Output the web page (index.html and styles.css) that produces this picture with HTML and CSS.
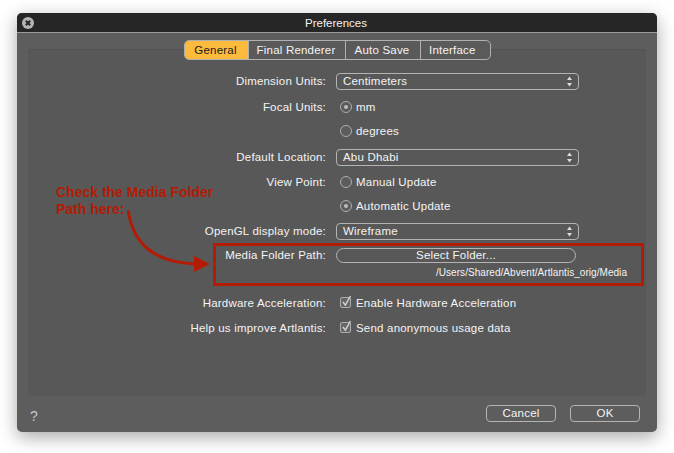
FILE: index.html
```html
<!DOCTYPE html>
<html lang="en">
<head>
    <meta charset="UTF-8">
    <meta name="viewport" content="width=device-width, initial-scale=1.0">
    <title>Preferences</title>
    <link rel="stylesheet" href="styles.css">
</head>
<body>
    <div class="window">
        <div class="titlebar">
            <svg class="close-icon" width="12" height="12" viewBox="0 0 12 12">
                <circle cx="6" cy="6" r="6" fill="#b4b4b4"/>
                <path d="M3.8 3.8L8.2 8.2M8.2 3.8L3.8 8.2" stroke="#262626" stroke-width="2"/>
            </svg>
            <span class="title">Preferences</span>
        </div>

        <div class="content">
            <div class="tabs">
                <div class="tab active tab-general">General</div>
                <div class="tab tab-renderer">Final Renderer</div>
                <div class="tab tab-save">Auto Save</div>
                <div class="tab tab-interface">Interface</div>
            </div>

            <div class="panel">
                <div class="form">
                    <div class="row row-select">
                        <div class="label">Dimension Units:</div>
                        <div class="select">Centimeters
                            <svg class="arrows" width="5" height="11" viewBox="0 0 5 11"><path d="M2.5 0.5L5 4H0ZM2.5 10.5L0 7H5Z" fill="#dcdcdc"/></svg>
                        </div>
                    </div>
                    <div class="row row-focal">
                        <div class="label">Focal Units:</div>
                        <div class="option"><span class="radio on"></span>mm</div>
                    </div>
                    <div class="row row-degrees">
                        <div class="label"></div>
                        <div class="option"><span class="radio"></span>degrees</div>
                    </div>
                    <div class="row row-location">
                        <div class="label">Default Location:</div>
                        <div class="select">Abu Dhabi
                            <svg class="arrows" width="5" height="11" viewBox="0 0 5 11"><path d="M2.5 0.5L5 4H0ZM2.5 10.5L0 7H5Z" fill="#dcdcdc"/></svg>
                        </div>
                    </div>
                    <div class="row row-view">
                        <div class="label">View Point:</div>
                        <div class="option"><span class="radio"></span>Manual Update</div>
                    </div>
                    <div class="row row-auto">
                        <div class="label"></div>
                        <div class="option"><span class="radio on"></span>Automatic Update</div>
                    </div>
                    <div class="row row-opengl">
                        <div class="label">OpenGL display mode:</div>
                        <div class="select">Wireframe
                            <svg class="arrows" width="5" height="11" viewBox="0 0 5 11"><path d="M2.5 0.5L5 4H0ZM2.5 10.5L0 7H5Z" fill="#dcdcdc"/></svg>
                        </div>
                    </div>
                    <div class="row row-media">
                        <div class="label">Media Folder Path:</div>
                        <div class="pill-button">Select Folder...</div>
                    </div>
                    <div class="media-path">/Users/Shared/Abvent/Artlantis_orig/Media</div>
                    <div class="row row-hardware">
                        <div class="label">Hardware Acceleration:</div>
                        <div class="option">
                            <svg class="check" width="13" height="14" viewBox="0 0 13 14"><rect x="0.5" y="2.5" width="10" height="10" rx="1.5" fill="#666" stroke="#adadad"/><path d="M3 7L5.4 10.2L10.4 1" fill="none" stroke="#cfcfcf" stroke-width="1.5"/></svg>
                            Enable Hardware Acceleration
                        </div>
                    </div>
                    <div class="row row-usage">
                        <div class="label">Help us improve Artlantis:</div>
                        <div class="option">
                            <svg class="check" width="13" height="14" viewBox="0 0 13 14"><rect x="0.5" y="2.5" width="10" height="10" rx="1.5" fill="#666" stroke="#adadad"/><path d="M3 7L5.4 10.2L10.4 1" fill="none" stroke="#cfcfcf" stroke-width="1.5"/></svg>
                            Send anonymous usage data
                        </div>
                    </div>
                </div>
            </div>

            <div class="footer">
                <span class="help">?</span>
                <div class="actions">
                    <div class="button">Cancel</div>
                    <div class="button">OK</div>
                </div>
            </div>
        </div>

        <!-- red notes drawn over the dialog -->
        <div class="note">Check the Media Folder<br>Path here:</div>
        <div class="note-box"></div>
        <svg class="note-arrow" width="84" height="63" viewBox="0 0 84 63">
            <path d="M1 0C6 32 24 52 68 54" fill="none" stroke="#b31b05" stroke-width="3"/>
            <path d="M67 46L83 54L67 62Z" fill="#b31b05"/>
        </svg>
    </div>
</body>
</html>
```

FILE: styles.css
```css
body {
    margin: 0;
    padding: 13px 17px 21px;
    background-color: #fff;
    font-family: 'Liberation Sans', Arial, sans-serif;
    font-size: 11.5px;
    letter-spacing: 0.2px;
    color: #f4f4f4;
}

.window {
    position: relative;
    width: 640px;
    height: 419px;
    border-radius: 5px;
    background-color: #5d5d5d;
    box-shadow: 0 5px 18px rgba(0, 0, 0, 0.35);
    display: flex;
    flex-direction: column;
}

.titlebar {
    height: 19px;
    flex-shrink: 0;
    display: flex;
    align-items: center;
    justify-content: center;
    position: relative;
    background-color: #262626;
    border-bottom: 1px solid #9a9a9a;
    border-radius: 5px 5px 0 0;
}

.close-icon {
    position: absolute;
    left: 5px;
    top: 4px;
}

.title {
    font-size: 11.5px;
    letter-spacing: 0;
    padding-right: 2px;
    color: #f2f2f2;
}

.content {
    flex: 1;
    display: flex;
    flex-direction: column;
    position: relative;
    padding: 16px 11px 0;
}

.tabs {
    position: absolute;
    top: 7px;
    left: 167px;
    display: flex;
    height: 20px;
    border: 1px solid #b0b0b0;
    border-radius: 5px;
    box-sizing: border-box;
    width: 307px;
    background-color: #5a5a5a;
    z-index: 1;
}

.tab {
    display: flex;
    align-items: center;
    justify-content: center;
    border-left: 1px solid #b0b0b0;
    box-sizing: border-box;
    padding-right: 2px;
}

.tab.active {
    border-left: none;
    background-color: #fdbb3d;
    color: #1a1a1a;
    border-radius: 4px 0 0 4px;
}

.tab-general { width: 63px; }
.tab-renderer { width: 97px; }
.tab-save { width: 75px; }
.tab-interface { width: 70px; justify-content: flex-start; padding-left: 8px; }

.panel {
    height: 347px;
    background-color: #585858;
    border-radius: 4px;
    box-shadow: inset 0 1px 1px rgba(0, 0, 0, 0.06);
}

.form {
    display: flex;
    flex-direction: column;
    padding-top: 22px;
}

.row {
    display: flex;
    align-items: center;
    gap: 10px;
}

.label {
    width: 298px;
    text-align: right;
    flex-shrink: 0;
}

.row-select { height: 20px; }
.row-focal { height: 20px; margin-top: 6px; }
.row-degrees { height: 20px; margin-top: 4px; }
.row-location { height: 20px; margin-top: 6px; }
.row-view { height: 20px; margin-top: 5px; }
.row-auto { height: 20px; margin-top: 4px; }
.row-opengl { height: 20px; margin-top: 5px; }
.row-media { height: 20px; margin-top: 4px; }
.row-hardware { height: 20px; margin-top: 13px; }
.row-usage { height: 20px; margin-top: 5px; }

.select {
    width: 243px;
    height: 17px;
    box-sizing: border-box;
    border: 1px solid #b4b4b4;
    border-radius: 4px;
    padding-left: 6px;
    display: flex;
    align-items: center;
    justify-content: space-between;
    padding-right: 6px;
}

.option {
    display: flex;
    align-items: center;
    padding-left: 4px;
}

.radio {
    width: 10px;
    height: 10px;
    border: 1px solid #adadad;
    border-radius: 50%;
    margin-right: 4px;
    position: relative;
    background-color: #5c5c5c;
}

.radio.on::after {
    content: "";
    position: absolute;
    left: 3px;
    top: 3px;
    width: 4px;
    height: 4px;
    border-radius: 50%;
    background-color: #bdbdbd;
}

.check {
    margin-right: 3px;
    margin-top: -3px;
}

.pill-button {
    width: 240px;
    height: 15px;
    box-sizing: border-box;
    border: 1px solid #b4b4b4;
    border-radius: 8px;
    display: flex;
    align-items: center;
    justify-content: center;
}

.media-path {
    height: 14px;
    margin-top: 1px;
    padding-right: 19px;
    text-align: right;
    font-size: 10px;
    letter-spacing: 0.05px;
    line-height: 14px;
}

.footer {
    flex: 1;
    display: flex;
    align-items: center;
    justify-content: space-between;
    padding-bottom: 2px;
}

.help {
    font-size: 14px;
    color: #c8c8c8;
    padding-top: 6px;
    padding-left: 2px;
}

.actions {
    display: flex;
    gap: 14px;
    padding-right: 6px;
}

.button {
    width: 70px;
    height: 17px;
    box-sizing: border-box;
    border: 1px solid #b4b4b4;
    border-radius: 4px;
    display: flex;
    align-items: center;
    justify-content: center;
}

.note {
    position: absolute;
    left: 39px;
    top: 171px;
    color: #b31b05;
    font-size: 14px;
    font-weight: bold;
    letter-spacing: 0;
    line-height: 17px;
}

.note-box {
    position: absolute;
    left: 196px;
    top: 230px;
    width: 425px;
    height: 37px;
    border: 3px solid #b31b05;
}

.note-arrow {
    position: absolute;
    left: 110px;
    top: 197px;
}
```
